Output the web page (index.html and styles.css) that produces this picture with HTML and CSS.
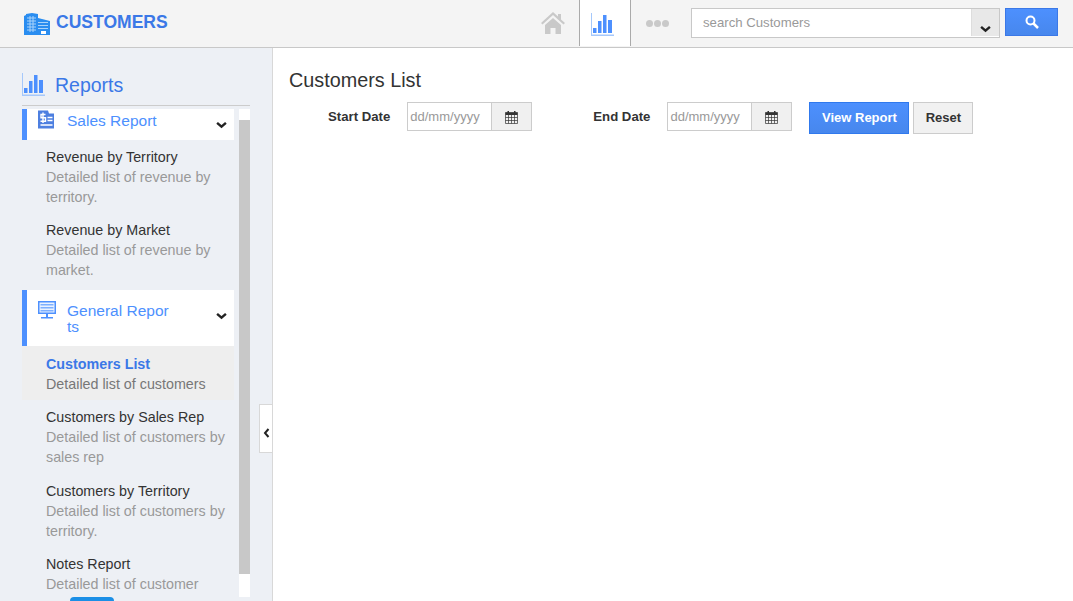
FILE: index.html
```html
<!DOCTYPE html>
<html lang="en">
<head>
    <meta charset="UTF-8">
    <title>Customers List</title>
    <link rel="stylesheet" href="styles.css">
</head>
<body>
    <!-- Top bar -->
    <div class="topbar">
        <div class="brand">
            <svg class="brand-icon" viewBox="0 0 26 22">
                <path fill="#2a8df0" d="M0 22V3l2-1V1l6-1 6 1v4l12 3v14z"/>
                <path stroke="#a9d3fa" stroke-width="1" d="M3 5h9M3 8h9M3 11h9M3 14h9M3 17h9M6 3v16M9 3v16"/>
                <path fill="#a9d3fa" d="M14 9h10v1h-10zM14 12h10v1h-10zM14 15h10v1h-10z"/>
                <path fill="#fff" d="M17 18h5v3h-5z"/>
            </svg>
            <span>CUSTOMERS</span>
        </div>
        <div class="nav-tabs">
            <div class="nav-tab">
                <svg class="home-icon" viewBox="0 0 24 22"><path fill="#c9c9c9" d="M12 0l5 4.600V2h3v5.400L24 11l-1.500 1.500L12 3 1.500 12.500 0 11zM4 13l8-7 8 7v9h-5.500v-6h-5v6H4z"/></svg>
            </div>
            <div class="nav-tab active">
                <svg class="bars-icon" viewBox="0 0 23 23">
                    <path fill="#a5c8fb" d="M0 0h1v21.500h22V23H0z"/>
                    <path fill="#4d90fe" d="M2 15h3.500v5H2zM7 8h3.500v12H7zM12 2h3.500v18H12zM17 7h4v13h-4z"/>
                </svg>
            </div>
            <div class="nav-tab">
                <div class="dots"><i></i><i></i><i></i></div>
            </div>
        </div>
        <div class="search">
            <input class="search-input" type="text" placeholder="search Customers">
            <div class="search-drop">
                <svg class="chevron" viewBox="0 0 10 7"><path d="M1 1.500l4 3.500 4-3.500"/></svg>
            </div>
        </div>
        <button class="search-btn">
            <svg viewBox="0 0 14 14"><circle cx="5.500" cy="5.500" r="4" fill="none" stroke="#fff" stroke-width="2"/><path d="M8.500 8.500l4.500 4.500" stroke="#fff" stroke-width="2.500"/></svg>
        </button>
    </div>

    <div class="layout">
        <!-- Sidebar -->
        <div class="sidebar">
            <div class="side-title">
                <svg class="side-title-icon" viewBox="0 0 23 23">
                    <path fill="#a5c8fb" d="M0 0h1v21.500h22V23H0z"/>
                    <path fill="#4d90fe" d="M2 15h3.500v5H2zM7 8h3.500v12H7zM12 2h3.500v18H12zM17 7h4v13h-4z"/>
                </svg>
                <span>Reports</span>
            </div>
            <div class="side-scroll">
                <div class="side-list">
                    <div class="group group-sales">
                        <svg class="group-icon sales-icon" viewBox="0 0 16 18">
                            <path fill="#4d7fe0" d="M0 0h10l1 3h5v15H0z"/>
                            <path stroke="#fff" stroke-width="1.400" fill="none" d="M7.500 4H3v3.300h4.500v3.400H2.500M5 2v10.500M9.500 7h5M9.500 10h5M2.500 14.500h12"/>
                        </svg>
                        <div class="group-name">Sales Report</div>
                        <svg class="chevron" viewBox="0 0 10 7"><path d="M1 1.500l4 3.500 4-3.500"/></svg>
                    </div>
                    <div class="item">
                        <div class="item-title">Revenue by Territory</div>
                        <div class="item-desc">Detailed list of revenue by territory.</div>
                    </div>
                    <div class="item">
                        <div class="item-title">Revenue by Market</div>
                        <div class="item-desc">Detailed list of revenue by market.</div>
                    </div>
                    <div class="group">
                        <svg class="group-icon" viewBox="0 0 18 19">
                            <path fill="#4d90fe" d="M0 0h18v13H0zM8 13h2v3h5v1.500H3V16h5z"/>
                            <path fill="#eaf2ff" d="M1.500 1.500h15v10h-15z"/>
                            <path fill="#7dafff" d="M2.500 3h13v1.500h-13zM2.500 6h13v1.500h-13zM2.500 9h13v1.500h-13z"/>
                        </svg>
                        <div class="group-name">General Reports</div>
                        <svg class="chevron" viewBox="0 0 10 7"><path d="M1 1.500l4 3.500 4-3.500"/></svg>
                    </div>
                    <div class="item selected">
                        <div class="item-title">Customers List</div>
                        <div class="item-desc">Detailed list of customers</div>
                    </div>
                    <div class="item">
                        <div class="item-title">Customers by Sales Rep</div>
                        <div class="item-desc">Detailed list of customers by sales rep</div>
                    </div>
                    <div class="item">
                        <div class="item-title">Customers by Territory</div>
                        <div class="item-desc">Detailed list of customers by territory.</div>
                    </div>
                    <div class="item">
                        <div class="item-title">Notes Report</div>
                        <div class="item-desc">Detailed list of customer</div>
                    </div>
                </div>
                <div class="side-track"><div class="side-thumb"></div></div>
            </div>
            <div class="collapse-handle">
                <svg viewBox="0 0 7 10"><path d="M5.500 1L2 5l3.500 4" fill="none" stroke="#222" stroke-width="2"/></svg>
            </div>
            <div class="chat-pill"></div>
        </div>

        <!-- Main content -->
        <div class="content">
            <h1 class="page-title">Customers List</h1>
            <div class="filters">
                <label class="filter-label label-start">Start Date</label>
                <div class="date-field">
                    <input class="date-input" type="text" placeholder="dd/mm/yyyy">
                    <div class="date-addon">
                        <svg viewBox="0 0 13 13"><path fill="#333" d="M2.500 0H4v2H2.500zM9 0h1.500v2H9zM.5 1.500h12V4H.5z"/><path fill="none" stroke="#333" d="M.5 1.500h12v11H.5zM.5 6.500h12M.5 9.500h12M3.500 4v8.500M6.500 4v8.500M9.500 4v8.500" stroke-width=".7"/></svg>
                    </div>
                </div>
                <label class="filter-label label-end">End Date</label>
                <div class="date-field">
                    <input class="date-input" type="text" placeholder="dd/mm/yyyy">
                    <div class="date-addon">
                        <svg viewBox="0 0 13 13"><path fill="#333" d="M2.500 0H4v2H2.500zM9 0h1.500v2H9zM.5 1.500h12V4H.5z"/><path fill="none" stroke="#333" d="M.5 1.500h12v11H.5zM.5 6.500h12M.5 9.500h12M3.500 4v8.500M6.500 4v8.500M9.500 4v8.500" stroke-width=".7"/></svg>
                    </div>
                </div>
                <button class="btn btn-primary">View Report</button>
                <button class="btn btn-plain">Reset</button>
            </div>
        </div>
    </div>
</body>
</html>
```

FILE: styles.css
```css
* {
    box-sizing: border-box;
    font-family: "Liberation Sans", Arial, sans-serif;
    margin: 0;
    padding: 0;
}

body {
    height: 601px;
    overflow: hidden;
    background: white;
    display: flex;
    flex-direction: column;
}

.chevron {
    width: 11px;
    height: 8px;
    flex: none;
}

.chevron path {
    fill: none;
    stroke: #222;
    stroke-width: 2.2;
}

/* Top bar */
.topbar {
    height: 48px;
    flex: none;
    background: #f4f4f4;
    border-bottom: 1px solid #c8c8c8;
    display: flex;
    align-items: flex-start;
    padding-right: 15px;
}

.brand {
    display: flex;
    align-items: center;
    gap: 6px;
    padding: 13px 0 0 24px;
    color: #3b78e7;
    font-size: 17.55px;
    font-weight: bold;
    flex: 1;
}

.brand span {
    margin-top: -4px;
}

.brand-icon {
    width: 26px;
    height: 22px;
}

.nav-tabs {
    display: flex;
    height: 46px;
    margin-right: 8px;
}

.nav-tab {
    width: 52px;
    display: flex;
    align-items: center;
    justify-content: center;
    border-left: 1px solid transparent;
    border-right: 1px solid transparent;
}

.nav-tab.active {
    background: white;
    border-color: #aaa;
}

.home-icon {
    width: 24px;
    height: 22px;
}

.bars-icon {
    width: 23px;
    height: 23px;
    margin-right: 6px;
    margin-top: 3px;
}

.dots {
    display: flex;
    gap: 1px;
}

.dots i {
    width: 7px;
    height: 7px;
    border-radius: 50%;
    background: #c9c9c9;
}

.search {
    width: 309px;
    height: 30px;
    margin-top: 8px;
    display: flex;
    background: white;
    border: 1px solid #c8c8c8;
}

.search-input {
    flex: 1;
    min-width: 0;
    border: none;
    outline: none;
    padding-left: 11px;
    padding-bottom: 2px;
    font-size: 13.2px;
    background: white;
}

.search-input::placeholder,
.date-input::placeholder {
    color: #999;
    opacity: 1;
}

.search-drop {
    width: 28px;
    height: 27px;
    background: #e8e8e8;
    border-left: 1px solid #ddd;
    display: flex;
    align-items: flex-end;
    justify-content: center;
    padding-bottom: 3px;
}

.search-btn {
    width: 53px;
    height: 28px;
    margin: 8px 0 0 5px;
    background: linear-gradient(#4d90fe, #4787ed);
    border: 1px solid #3b78e7;
    display: flex;
    align-items: center;
    justify-content: center;
}

.search-btn svg {
    width: 14px;
    height: 14px;
}

/* Sidebar */
.layout {
    flex: 1;
    min-height: 0;
    display: flex;
}

.sidebar {
    width: 273px;
    flex: none;
    position: relative;
    background: #edf0f5;
    border-right: 1px solid #d8d8d8;
    padding: 0 22px 4px;
    display: flex;
    flex-direction: column;
}

.side-title {
    height: 58px;
    flex: none;
    display: flex;
    align-items: center;
    gap: 10px;
    padding-top: 18px;
    border-bottom: 1px solid #ccc;
    color: #3b78e7;
    font-size: 19.5px;
}

.side-title span {
    margin-top: -1px;
}

.side-title-icon {
    width: 23px;
    height: 23px;
    margin-top: -3px;
}

.side-scroll {
    flex: 1;
    min-height: 0;
    margin-top: 3px;
    display: flex;
    gap: 5px;
}

.side-list {
    width: 212px;
    overflow: hidden;
}

.group {
    background: white;
    border-left: 5px solid #4d90fe;
    height: 56px;
    margin-top: 3px;
    padding: 13px 13px 0 11px;
    display: flex;
    position: relative;
    color: #4d90fe;
}

.group-sales {
    height: 31px;
    margin-top: 0;
    padding-top: 4px;
}

.group-icon {
    width: 18px;
    height: 19px;
    flex: none;
    margin-top: -2px;
}

.sales-icon {
    width: 16px;
    margin-top: -3px;
}

.group-name {
    width: 105px;
    margin-left: 11px;
    font-size: 15.5px;
    line-height: 16px;
    word-break: break-all;
}

.group-sales .group-name {
    margin-left: 13px;
}

.group .chevron {
    position: absolute;
    right: 7px;
    top: 22px;
}

.group-sales .chevron {
    top: 12px;
}

.item {
    padding: 6.8px 8px 6.8px 24px;
    font-size: 14.3px;
    line-height: 20px;
}

.item-title {
    color: #333;
}

.item-desc {
    color: #999;
}

.item.selected {
    background: #eeeeee;
    padding-top: 8px;
    padding-bottom: 6px;
}

.item.selected .item-title {
    color: #3b78e7;
    font-weight: bold;
}

.item.selected .item-desc {
    color: #777;
}

.side-track {
    width: 11px;
    flex: none;
    background: white;
    padding-top: 11px;
}

.side-thumb {
    height: 454px;
    background: #c8c8c8;
}

.collapse-handle {
    position: absolute;
    right: 0;
    top: 356px;
    width: 13px;
    height: 49px;
    padding-top: 8px;
    background: white;
    border: 1px solid #d8d8d8;
    border-right: none;
    display: flex;
    align-items: center;
    justify-content: center;
}

.collapse-handle svg {
    width: 7px;
    height: 10px;
}

.chat-pill {
    position: absolute;
    left: 70px;
    bottom: 0;
    width: 44px;
    height: 4px;
    background: #1b8fe6;
    border-radius: 8px 8px 0 0;
}

/* Main content */
.content {
    flex: 1;
    padding: 19px 16px;
}

.page-title {
    font-size: 19.8px;
    font-weight: normal;
    color: #333;
    line-height: 26px;
    margin-bottom: 9px;
}

.filters {
    display: flex;
    align-items: flex-start;
}

.filter-label {
    font-size: 13.2px;
    font-weight: bold;
    color: #333;
    line-height: 29px;
}

.label-start {
    margin-left: 39px;
    margin-right: 17px;
}

.label-end {
    margin-left: 61px;
    margin-right: 17px;
}

.date-field {
    width: 125px;
    height: 29px;
    display: flex;
    border: 1px solid #ccc;
}

.date-input {
    width: 83px;
    border: none;
    outline: none;
    padding-left: 2px;
    font-size: 13px;
    background: white;
}

.date-addon {
    flex: 1;
    background: #f0f0f0;
    border-left: 1px solid #ccc;
    display: flex;
    align-items: center;
    justify-content: center;
}

.date-addon svg {
    width: 13px;
    height: 13px;
    margin-top: 2px;
}

.btn {
    height: 32px;
    padding-bottom: 2px;
    font-size: 13px;
    font-weight: bold;
}

.btn-primary {
    width: 100px;
    margin-left: 17px;
    color: white;
    background: linear-gradient(#4d90fe, #4787ed);
    border: 1px solid #3079ed;
}

.btn-plain {
    width: 60px;
    margin-left: 4px;
    color: #333;
    background: #f1f1f1;
    border: 1px solid #ccc;
}
```
